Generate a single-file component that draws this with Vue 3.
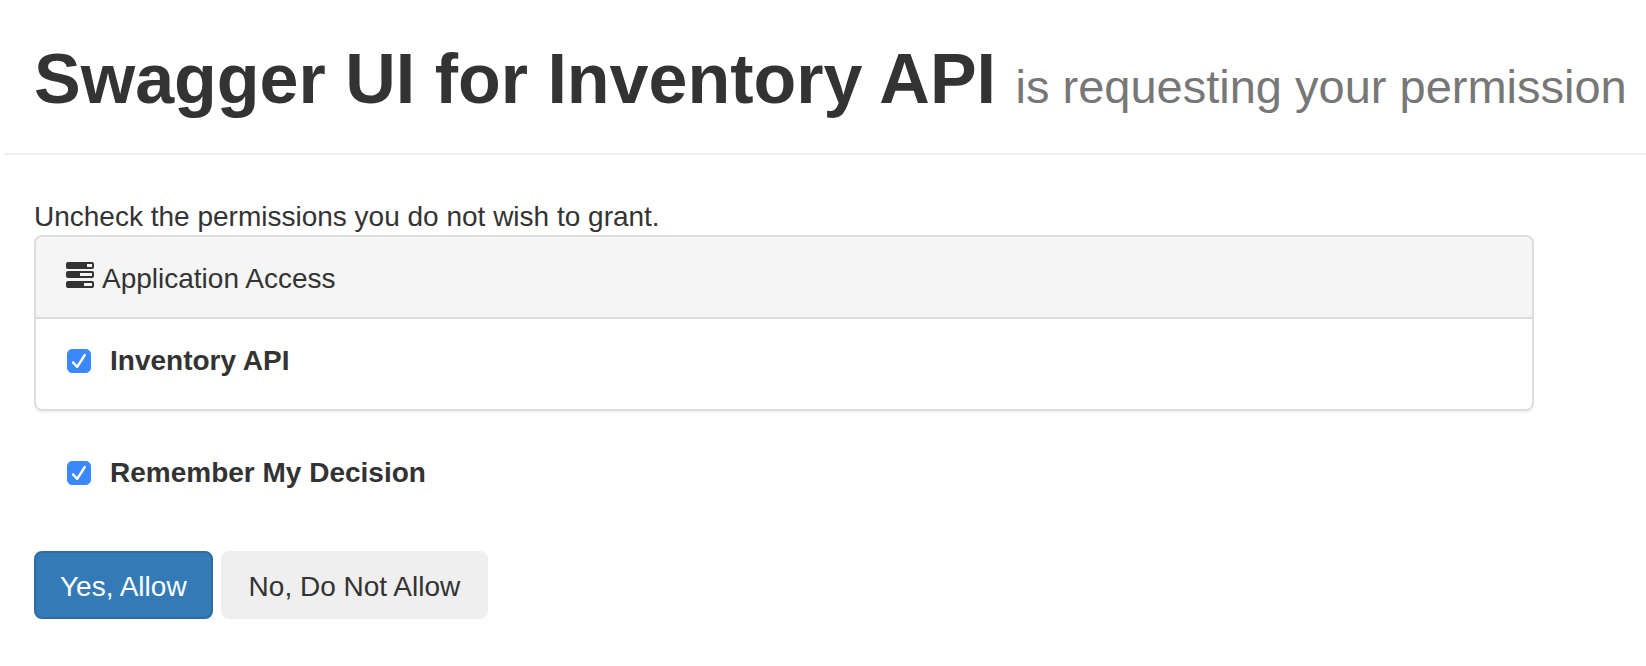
<script setup>
import { ref } from 'vue'

const inventory = ref(true)
const remember = ref(true)
</script>

<template>
  <main class="page">
    <header class="page-header">
      <h1>Swagger UI for Inventory API <small>is requesting your permission</small></h1>
    </header>

    <form class="consent" @submit.prevent>
      <p class="hint">Uncheck the permissions you do not wish to grant.</p>

      <section class="panel">
        <div class="panel-heading">
          <svg class="tasks" viewBox="0 0 28 26" aria-hidden="true">
            <rect x="0" y="0" width="28" height="7" rx="2" fill="#333" />
            <rect x="21" y="2" width="5" height="3" fill="#f5f5f5" />
            <rect x="0" y="9" width="28" height="7" rx="2" fill="#333" />
            <rect x="14" y="11" width="12" height="3" fill="#f5f5f5" />
            <rect x="0" y="19" width="28" height="7" rx="2" fill="#333" />
            <rect x="18" y="21" width="8" height="3" fill="#f5f5f5" />
          </svg>
          <span>Application Access</span>
        </div>
        <div class="panel-body">
          <label class="check" for="scope-inventory">
            <span class="box">
              <input id="scope-inventory" v-model="inventory" type="checkbox" />
              <svg v-if="inventory" viewBox="0 0 24 24" aria-hidden="true"><path d="M6 13.4 L10.2 17.8 L17.8 6" /></svg>
            </span>
            <strong>Inventory API</strong>
          </label>
        </div>
      </section>

      <label class="check remember" for="remember">
        <span class="box">
          <input id="remember" v-model="remember" type="checkbox" />
          <svg v-if="remember" viewBox="0 0 24 24" aria-hidden="true"><path d="M6 13.4 L10.2 17.8 L17.8 6" /></svg>
        </span>
        <strong>Remember My Decision</strong>
      </label>

      <div class="actions">
        <button class="btn primary" type="submit">Yes, Allow</button>
        <button class="btn secondary" type="button">No, Do Not Allow</button>
      </div>
    </form>
  </main>
</template>

<style>
body {
  background: #fff;
}
</style>

<style scoped>
.page {
  box-sizing: border-box;
  padding: 40px 0 46px 4px;
  overflow: hidden;
  color: #333;
  font-family: "Helvetica Neue", "Liberation Sans", Arial, sans-serif;
  font-size: 28px;
  line-height: 40px;
}
.page-header {
  padding: 0 0 34px 30px;
  border-bottom: 2px solid #eee;
}
h1 {
  margin: 0;
  font-size: 70px;
  font-weight: 700;
  line-height: 79px;
  white-space: nowrap;
}
small {
  color: #777;
  font-size: 47px;
  font-weight: 400;
  line-height: 1;
}
.consent {
  margin: 40px 112px 0 30px;
}
.hint {
  margin: 0;
  padding-top: 4px;
  line-height: 36px;
}
.panel {
  border: 2px solid #ddd;
  border-radius: 8px;
  box-shadow: 0 2px 2px rgba(0, 0, 0, 0.05);
}
.panel-heading {
  display: flex;
  gap: 8px;
  padding: 22px 30px 18px;
  border-bottom: 2px solid #ddd;
  border-radius: 6px 6px 0 0;
  background: #f5f5f5;
}
.tasks {
  width: 28px;
  height: 26px;
  margin-top: 3px;
}
.panel-body {
  padding: 22px 30px 28px;
}
.check {
  display: flex;
  align-items: center;
  gap: 19px;
  width: fit-content;
  padding-left: 1px;
}
.box {
  position: relative;
  width: 24px;
  height: 24px;
}
.box input {
  display: block;
  width: 24px;
  height: 24px;
  margin: 0;
  appearance: none;
  border: 1px solid #aaa;
  border-radius: 5px;
  background: #fff;
}
.box input:checked {
  border-color: #3b88fd;
  background: #3b88fd;
}
.box svg {
  position: absolute;
  inset: 0;
  pointer-events: none;
}
.box path {
  fill: none;
  stroke: #fff;
  stroke-width: 2.4;
  stroke-linecap: round;
  stroke-linejoin: round;
}
.remember {
  margin: 42px 0 0 32px;
}
.actions {
  display: flex;
  gap: 8px;
  margin-top: 58px;
}
.btn {
  padding: 14px 24px 10px;
  border: 2px solid #efefef;
  border-radius: 8px;
  background: #efefef;
  color: #333;
  font: inherit;
  white-space: nowrap;
}
.secondary {
  padding-right: 26px;
  padding-left: 26px;
}
.primary {
  border-color: #2e6da4;
  background: #337ab7;
  color: #fff;
}
</style>
